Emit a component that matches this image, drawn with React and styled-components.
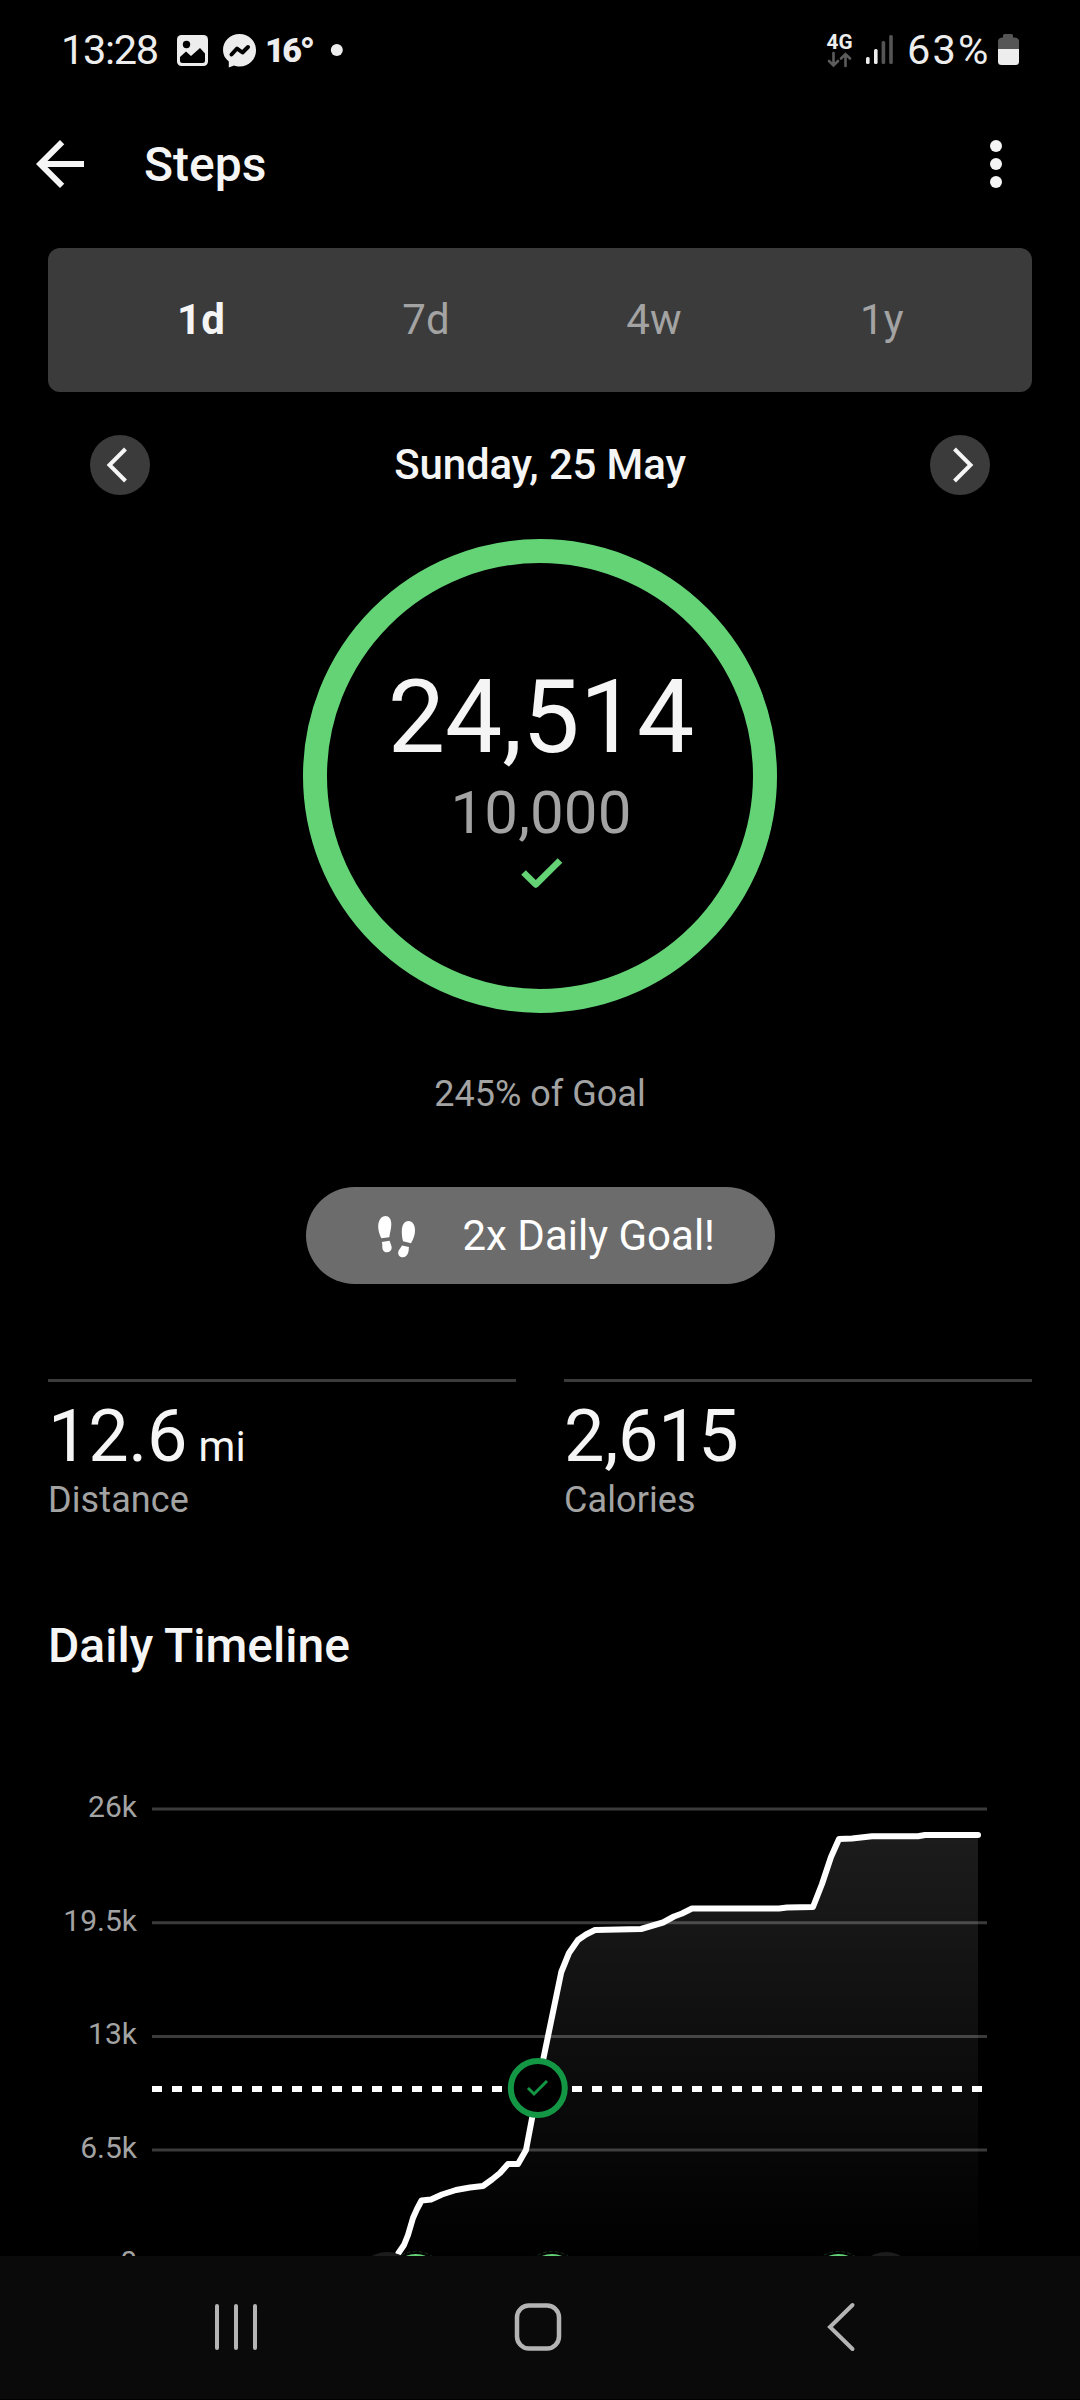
import { useState } from "react";
import styled, { createGlobalStyle } from "styled-components";

const GlobalStyle = createGlobalStyle`
  *{
    box-sizing: border-box;
  }
  body{
    margin: 0;
    background: #000;
    font-family: Roboto, sans-serif;
    color: #f5f5f5;
  }
  svg{
    display: block;
    flex: none;
  }
  button{
    background: none;
    border: none;
    padding: 0;
    font: inherit;
    color: inherit;
  }
`

const Screen = styled.div`
  width: 1080px;
  height: 2400px;
  overflow: hidden;
  display: flex;
  flex-direction: column;
  background: #000;
`

const StatusBar = styled.div`
  height: 100px;
  flex: none;
  display: flex;
  justify-content: space-between;
  padding: 0 61px 0 61px;
  color: #ededed;

  & .side{
    display: flex;
    align-items: center;
  }
`

const StatusText = styled.span`
  width: ${({$width}) => $width}px;
  padding-left: ${({$indent}) => $indent || 0}px;
  font-size: 41.5px;
  letter-spacing: ${({$spacing}) => $spacing || 0}px;
  line-height: 1;
  white-space: nowrap;
`

const AppBar = styled.header`
  height: 128px;
  flex: none;
  display: flex;
  align-items: center;
  padding: 0 48px 0 24px;

  & h1{
    flex: 1;
    margin: 0 0 0 48px;
    font-size: 48px;
    font-weight: 500;
  }
`

const Content = styled.main`
  flex: 1;
  min-height: 0;
  overflow: hidden;
  display: flex;
  flex-direction: column;
  padding: 20px 48px 0;
`

const Tabs = styled.div`
  height: 144px;
  flex: none;
  display: grid;
  grid-template-columns: repeat(4, 1fr);
  padding: 0 36px 2px;
  background: #3b3b3b;
  border-radius: 12px;
`

const Tab = styled.button`
  padding-left: ${({$active}) => $active ? 6 : 0}px;
  font-size: 42px;
  letter-spacing: .2px;
  font-weight: ${({$active}) => $active ? 700 : 400};
  color: ${({$active}) => $active ? '#f5f5f5' : '#a3a3a3'};
`

const DateRow = styled.div`
  height: 60px;
  flex: none;
  margin-top: 43px;
  padding: 0 42px;
  display: flex;
  align-items: center;
  justify-content: space-between;
  font-size: 42px;
  font-weight: 500;
  letter-spacing: -.15px;

  & span{
    padding-bottom: 2px;
  }
`

const RoundButton = styled.button`
  width: 60px;
  height: 60px;
  border-radius: 50%;
  background: #3b3b3b;
`

const Ring = styled.div`
  width: 474px;
  height: 474px;
  flex: none;
  align-self: center;
  margin-top: 44px;
  padding-top: 94px;
  border: 24px solid #63d376;
  border-radius: 50%;
  display: flex;
  flex-direction: column;
  align-items: center;

  & .steps{
    padding-left: 2px;
    font-size: 102px;
    line-height: 120px;
  }
  & .goal{
    padding-left: 2px;
    margin-top: 1px;
    font-size: 60px;
    line-height: 70px;
    letter-spacing: .1px;
    color: #a3a3a3;
  }
  & svg{
    margin: 10px 0 0 4px;
  }
`

const Percent = styled.p`
  margin: 59px 0 0;
  text-align: center;
  font-size: 36px;
  line-height: 44px;
  color: #a3a3a3;
`

const Badge = styled.div`
  width: 469px;
  height: 97px;
  flex: none;
  align-self: center;
  margin-top: 71px;
  padding-left: 72px;
  border-radius: 49px;
  background: #6c6c6c;
  color: #fff;
  font-size: 42px;
  display: flex;
  align-items: center;
  gap: 47px;

  & svg{
    margin-top: 3px;
  }
`

const Stats = styled.div`
  display: grid;
  grid-template-columns: 1fr 1fr;
  gap: 48px;
  margin-top: 95px;
`

const Stat = styled.div`
  border-top: 3px solid #3b3b3b;
  padding-top: 13px;

  & .value{
    height: 84px;
    font-size: 72px;
    line-height: 84px;
    letter-spacing: -.3px;
  }
  & .unit{
    margin-left: 1px;
    font-size: 42px;
    line-height: 1;
    letter-spacing: 0;
  }
  & .label{
    font-size: 36px;
    line-height: 42px;
    letter-spacing: .1px;
    color: #a3a3a3;
  }
`

const SectionTitle = styled.h2`
  margin: 97px 0 0;
  font-size: 48px;
  line-height: 56px;
  font-weight: 500;
`

const Chart = styled.div`
  flex: none;
  display: flex;
  gap: 15px;
  margin-top: 106px;
`

const AxisLabels = styled.div`
  width: 89px;
  flex: none;
  padding-top: 9px;
  text-align: right;
  font-size: 30px;
  color: #a3a3a3;

  & div{
    height: 113.7px;
    line-height: 36px;
  }
`

const NavBar = styled.nav`
  height: 143px;
  margin-bottom: 1px;
  flex: none;
  display: flex;
  align-items: center;
  justify-content: space-between;
  padding: 0 223px 1px 212px;
  background: #0a0a0a;

  & .home{
    margin-right: 7px;
  }
`

const AXIS = ['26k', '19.5k', '13k', '6.5k', '0'];
const GRID = [1809, 1922.7, 2036.5, 2150];
const LINE = "398.5,2253 404,2245 408,2235 413,2218 417,2209 421.5,2200.5 431,2199.5 442,2194.5 456,2190 470,2187.5 483,2186 492,2179.5 500,2173 508,2164 518,2164 526,2150 543.5,2058 561.3,1972 569,1953 578,1940 586,1934.5 595,1930 641,1929 663,1922.5 674,1916.5 682,1913.5 692,1908.5 779,1908.5 787,1907.5 813,1907 822,1884 831,1857 839,1839 852,1838.5 872,1836.3 918,1836.3 925,1835 978,1835";
// activity bubbles under the time axis
const GREEN_MARKS = [415.8, 552, 838.5];
const GREY_MARKS = [387, 886];

function Check() {
  return (
    <svg width="42" height="31" viewBox="0 0 42 31" fill="none" stroke="#63d376" strokeWidth="6.5" strokeLinejoin="round">
      <path d="M2.5 14.5L14.8 26.5L39 2.5"/>
    </svg>
  );
}

function Chevron({left}) {
  return (
    <svg width="60" height="60" viewBox="0 0 60 60" fill="none" stroke="#f5f5f5" strokeWidth="4">
      <path d={left ? "M35.5 14L19.5 30L35.5 46" : "M24.5 14L40.5 30L24.5 46"}/>
    </svg>
  );
}

function Footprints() {
  return (
    <svg width="38" height="42" viewBox="0 0 38 42" fill="#fff">
      <path d="M7.5 0C11 0 13.3 3 13.3 8C13.3 13 12 16 11.3 21.3L3.3 22.2C1.2 18 .1 14 .2 10C.4 4 3.6 0 7.5 0z"/>
      <path d="M3.8 26L11.6 24.8C12.4 28 13.7 29.5 13.7 31.8C13.7 34.5 11.6 36.3 9 36.3C6 36.3 4.3 34 4.3 31C4.3 29 4.4 28 3.8 26z"/>
      <path d="M30.5 5C34.5 5 37 9 37 14.5C37 19 35.5 22.5 33 27.3L25 25.2C24 21 23.8 19 23.8 15C23.8 9 26.5 5 30.5 5z"/>
      <path d="M24 29.5L31 31C30.6 33 31 34 30.3 36.3C29.3 39.5 27.3 41.3 24.8 41.3C22 41.3 20 39.5 20.2 36.3C20.4 33.5 22.8 32.3 24 29.5z"/>
    </svg>
  );
}

function Timeline() {
  return (
    <svg width="880" height="490" viewBox="152 1780 880 490" fill="none">
      <defs>
        <linearGradient id="area" gradientUnits="userSpaceOnUse" x1="0" y1="1835" x2="0" y2="2262">
          <stop offset="0" stopColor="#fff" stopOpacity=".11"/>
          <stop offset="1" stopColor="#fff" stopOpacity="0"/>
        </linearGradient>
      </defs>
      {GRID.map(y => <path key={y} d={`M152 ${y}H987`} stroke="#3b3b3b" strokeWidth="3"/>)}
      <polygon points={`${LINE} 978,2270 398,2270`} fill="url(#area)"/>
      <path d="M152 2089H983" stroke="#fff" strokeWidth="6" strokeDasharray="10 10"/>
      <polyline points={LINE} stroke="#fff" strokeWidth="6" strokeLinecap="round" strokeLinejoin="round"/>
      <circle cx="537.8" cy="2088" r="27" fill="#000" stroke="#149745" strokeWidth="6"/>
      <path d="M528 2088L534 2094L547 2081" stroke="#149745" strokeWidth="3"/>
      {GREY_MARKS.map(x => <circle key={x} cx={x} cy="2282" r="30" fill="#1c1c1c"/>)}
      {GREEN_MARKS.map(x => (
        <g key={x}>
          <circle cx={x} cy="2281.5" r="30" fill="#000" stroke="#16301b" strokeWidth="1" strokeDasharray="4 2"/>
          <circle cx={x} cy="2281" r="27" fill="#63d376"/>
        </g>
      ))}
    </svg>
  );
}

function PhoneStatus() {
  return (
    <StatusBar>
      <div className="side">
        <StatusText $width={109} $spacing={-1.3}>13:28</StatusText>
        <svg width="182" height="44" viewBox="170 28 182 44">
          <rect x="177" y="35" width="31" height="31" rx="4.5" fill="#ededed"/>
          <circle cx="186.5" cy="44.5" r="3.7" fill="#000"/>
          <path d="M180 57L186 51.5L191 56L200 48L205 53.5V60.5Q205 63 202.5 63H182.5Q180 63 180 60.5z" fill="#000"/>
          <path d="M239.5 34C230 34 223 41 223 50C223 54.7 225 58.5 228.8 61.5V67.5L234 65.5C236 66.2 237.5 66.5 239.5 66.5C249 66.5 256 59.5 256 50.3C256 41 249 34 239.5 34z" fill="#ededed"/>
          <path d="M231.5 54.5L237 48.5L242.5 52.5L248 47" fill="none" stroke="#000" strokeWidth="4" strokeLinecap="round" strokeLinejoin="round"/>
          <text x="265" y="62" fontSize="34" fontWeight="900" letterSpacing="-2.5" fill="#ededed">16<tspan fontSize="40" dy="4">°</tspan></text>
          <circle cx="336.8" cy="50" r="6" fill="#ededed"/>
        </svg>
      </div>
      <div className="side">
        <svg width="82" height="44" viewBox="820 28 82 44">
          <text x="826.5" y="49" fontSize="21" fontWeight="700" fill="#ededed" textLength="26" lengthAdjust="spacingAndGlyphs">4G</text>
          <path d="M833.5 53V65M829 61L833.5 65.5L838 61M845.5 66V54M841 58.5L845.5 54L850 58.5" fill="none" stroke="#5c5c5c" strokeWidth="2.6" strokeLinecap="round"/>
          <rect x="866" y="57" width="3.6" height="7" rx="1.5" fill="#ededed"/>
          <rect x="874" y="49" width="3.6" height="15" rx="1.5" fill="#ededed"/>
          <rect x="881.6" y="41" width="3.6" height="23" rx="1.5" fill="#555"/>
          <rect x="889.2" y="35" width="3.6" height="29" rx="1.5" fill="#555"/>
        </svg>
        <StatusText $width={91} $indent={5} $spacing={2.2}>63%</StatusText>
        <svg width="26" height="44" viewBox="993 28 26 44">
          <path d="M1003 35.5Q1003 34 1004.5 34H1011.5Q1013 34 1013 35.5V37.5H1015Q1019 38 1019 41V49H998V41Q998 38 1002 37.5H1003z" fill="#555"/>
          <path d="M998 49H1019V61.5Q1019 65 1015.5 65H1001.5Q998 65 998 61.5z" fill="#ededed"/>
        </svg>
      </div>
    </StatusBar>
  );
}

export default function App() {
  const [range, setRange] = useState('1d');

  return (
    <>
      <GlobalStyle/>
      <Screen>
        <PhoneStatus/>
        <AppBar>
          <svg width="72" height="72" viewBox="0 0 24 24" fill="#f5f5f5">
            <path d="M20 11H7.83l5.59-5.59L12 4l-8 8 8 8 1.41-1.41L7.83 13H20v-2z"/>
          </svg>
          <h1>Steps</h1>
          <svg width="72" height="72" viewBox="0 0 24 24" fill="#f5f5f5">
            <circle cx="12" cy="6" r="2"/>
            <circle cx="12" cy="12" r="2"/>
            <circle cx="12" cy="18" r="2"/>
          </svg>
        </AppBar>
        <Content>
          <Tabs>
            {['1d', '7d', '4w', '1y'].map(t => (
              <Tab key={t} $active={t === range} onClick={()=>{setRange(t)}}>{t}</Tab>
            ))}
          </Tabs>
          <DateRow>
            <RoundButton><Chevron left/></RoundButton>
            <span>Sunday, 25 May</span>
            <RoundButton><Chevron/></RoundButton>
          </DateRow>
          <Ring>
            <div className="steps">24,514</div>
            <div className="goal">10,000</div>
            <Check/>
          </Ring>
          <Percent>245% of Goal</Percent>
          <Badge>
            <Footprints/>
            <span>2x Daily Goal!</span>
          </Badge>
          <Stats>
            <Stat>
              <div className="value">12.6<span className="unit"> mi</span></div>
              <div className="label">Distance</div>
            </Stat>
            <Stat>
              <div className="value">2,615</div>
              <div className="label">Calories</div>
            </Stat>
          </Stats>
          <SectionTitle>Daily Timeline</SectionTitle>
          <Chart>
            <AxisLabels>
              {AXIS.map(a => <div key={a}>{a}</div>)}
            </AxisLabels>
            <Timeline/>
          </Chart>
        </Content>
        <NavBar>
          <svg width="48" height="50" viewBox="212 2302 48 50" stroke="#b4b4b4" strokeWidth="4" strokeLinecap="round">
            <path d="M217 2306V2348M236 2306V2348M255 2306V2348"/>
          </svg>
          <svg className="home" width="50" height="50" viewBox="513 2302 50 50" fill="none" stroke="#b4b4b4" strokeWidth="4.5">
            <rect x="517" y="2305.5" width="42" height="43" rx="12"/>
          </svg>
          <svg width="34" height="50" viewBox="824 2302 34 50" fill="none" stroke="#b4b4b4" strokeWidth="4" strokeLinecap="round">
            <path d="M853.5 2305L831 2327L853.5 2349"/>
          </svg>
        </NavBar>
      </Screen>
    </>
  );
}
